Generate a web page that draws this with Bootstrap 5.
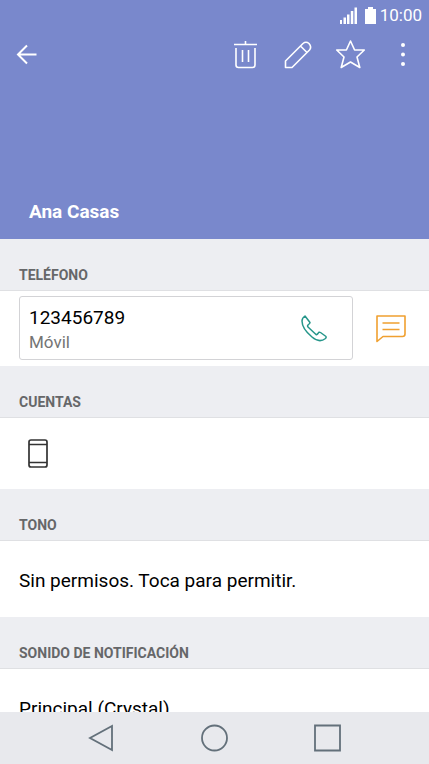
<!DOCTYPE html>
<html lang="es">
<head>
<meta charset="utf-8">
<meta name="viewport" content="width=device-width, initial-scale=1">
<title>Ana Casas</title>
<link rel="stylesheet" href="https://cdn.jsdelivr.net/npm/bootstrap@5.3.0/dist/css/bootstrap.min.css">
<style>
  body { font-family: Roboto, "Liberation Sans", sans-serif; color: #000; background: #fff; }
  svg { display: block; fill: none; stroke: currentColor; }
  .hero { background: #7988cc; min-height: 239px; }
  .status-bar { height: 30px; font-size: 17px; line-height: 30px; padding-right: 7px; }
  .icon-btn { width: 52px; height: 50px; border: 0; border-radius: 0; padding: 0; color: inherit; }
  .icon-btn:hover { color: inherit; }
  .tools { gap: 1px; }
  .contact-name { font-size: 19px; line-height: 24px; padding: 0 29px 15px; }
  .section-title { font-size: 14px; line-height: 20px; padding: 26px 19px 5px; color: #666769; background: #edeef2; border-bottom: 1px solid #dfe0e3; }
  .phone-row { padding: 5px 0 6px 19px; }
  .phone-card { border: 1px solid #d3d3d6; border-radius: 3px; height: 64px; padding-left: 9px; padding-right: 12px; }
  .entry { font-size: 19px; line-height: 24px; }
  .kind { font-size: 17px; line-height: 24px; color: #747474; }
  .icon-btn.call, .icon-btn.call:hover { color: #26968a; }
  .icon-btn.message, .icon-btn.message:hover { color: #f0a030; width: 76px; }
  .account-row { padding: 20px 27px; height: 71px; color: #333; }
  .entry-row { min-height: 76px; padding: 4px 19px 0; }
  .content { min-height: 0; }
  .system-nav { height: 52px; background: #e8e9ed; color: #63707a; padding: 0 44px; }
</style>
<script src="https://cdn.jsdelivr.net/npm/bootstrap@5.3.0/dist/js/bootstrap.bundle.min.js"></script>
</head>
<body class="d-flex flex-column vh-100 overflow-hidden">
<header class="hero d-flex flex-column flex-shrink-0 text-white">
  <div class="status-bar d-flex align-items-center justify-content-end gap-1">
    <svg class="me-1" width="17" height="17" viewBox="0 0 17 17" aria-hidden="true"><path fill="currentColor" stroke="none" d="M0 13h2v4H0zM3.500 10.500h2.500v6.500H3.500zM7 7.500h2.500v9.500H7zM10.800 4h2.500v13h-2.500zM14.500 0.500h2.500v16.500h-2.500z"/></svg>
    <svg width="11" height="17" viewBox="0 0 11 17" aria-hidden="true"><path fill="currentColor" stroke="none" d="M3 0h5v2h3v15H0V2h3z"/></svg>
    <span>10:00</span>
  </div>
  <div class="d-flex justify-content-between">
    <button class="btn icon-btn" aria-label="Volver"><svg width="52" height="50" viewBox="0 0 52 50" stroke-width="2"><path d="M36.500 24.500H18M27 15.500L18 24.500L27 33.500"/></svg></button>
    <div class="d-flex tools">
      <button class="btn icon-btn" aria-label="Eliminar"><svg width="52" height="50" viewBox="0 0 52 50" stroke-width="1.600"><path d="M16 14.500H39M27.500 11V14M18 18V35Q18 37.500 20.500 37.500H34.500Q37 37.500 37 35V18M24.500 20V32M30.500 20V32"/></svg></button>
      <button class="btn icon-btn" aria-label="Editar"><svg width="52" height="50" viewBox="0 0 52 50" stroke-width="1.600" stroke-linejoin="round"><path d="M14.500 37.500V31L32 13.500Q35 11 38 13.500Q41 17 38.500 20L21 37.500ZM29.500 16L36 22.500"/></svg></button>
      <button class="btn icon-btn" aria-label="Favorito"><svg width="52" height="50" viewBox="0 0 52 50" stroke-width="1.600" stroke-linejoin="round"><path d="M26.500 11L30.600 20H40.300L33 27L35.800 37.500L26.500 32L17.200 37.500L20 27L12.700 20H22.400Z"/></svg></button>
      <button class="btn icon-btn" aria-label="Más opciones"><svg width="52" height="50" viewBox="0 0 52 50"><g fill="currentColor" stroke="none"><circle cx="26" cy="15" r="2"/><circle cx="26" cy="24.500" r="2"/><circle cx="26" cy="34" r="2"/></g></svg></button>
    </div>
  </div>
  <h1 class="contact-name fw-bold mt-auto mb-0">Ana Casas</h1>
</header>
<main class="content flex-fill overflow-hidden">
  <section>
    <h2 class="section-title fw-bold mb-0">TELÉFONO</h2>
    <div class="phone-row d-flex align-items-center">
      <div class="phone-card flex-fill d-flex align-items-center justify-content-between">
        <div class="pt-1"><div class="entry">123456789</div><div class="kind">Móvil</div></div>
        <button class="btn icon-btn call" aria-label="Llamar"><svg width="52" height="50" viewBox="0 0 52 50" stroke-width="1.500" stroke-linejoin="round"><path d="M17 13L22 19.500Q22 20.500 20.500 21.500Q19 22.500 20 24L28 31.500Q29 32 30 30.500Q31 28.500 32.500 29.500L38 33.500Q38.500 34.500 37.500 35.500C33 39 28 37.500 24 34C18 29 14 23 14 18Q14 15 17 13Z"/></svg></button>
      </div>
      <button class="btn icon-btn message" aria-label="Enviar mensaje"><svg width="76" height="50" viewBox="0 0 76 50" stroke-width="1.600" stroke-linejoin="round"><path d="M24 13H52V31Q52 33.500 49.500 33.500H30L24 38.500ZM29.500 20H46.500M29.500 26.500H46.500"/></svg></button>
    </div>
  </section>
  <section>
    <h2 class="section-title fw-bold mb-0">CUENTAS</h2>
    <div class="account-row"><svg width="22" height="31" viewBox="0 0 22 31" stroke-width="1.700" role="img" aria-label="Teléfono"><rect x="2" y="2" width="18" height="27" rx="2"/><path d="M2 6.500H20M2 24.500H20"/></svg></div>
  </section>
  <section>
    <h2 class="section-title fw-bold mb-0">TONO</h2>
    <div class="entry-row entry d-flex align-items-center">Sin permisos. Toca para permitir.</div>
  </section>
  <section>
    <h2 class="section-title fw-bold mb-0">SONIDO DE NOTIFICACIÓN</h2>
    <div class="entry-row entry d-flex align-items-center">Principal (Crystal)</div>
  </section>
</main>
<nav class="system-nav d-flex flex-shrink-0" aria-label="Sistema">
  <button class="btn icon-btn flex-fill d-flex justify-content-center" aria-label="Atrás"><svg width="52" height="50" viewBox="0 0 52 50" stroke-width="1.800"><path d="M37 14V38L15 26Z"/></svg></button>
  <button class="btn icon-btn flex-fill d-flex justify-content-center" aria-label="Inicio"><svg width="52" height="50" viewBox="0 0 52 50" stroke-width="1.800"><circle cx="25.500" cy="26" r="12.500"/></svg></button>
  <button class="btn icon-btn flex-fill d-flex justify-content-center" aria-label="Recientes"><svg width="52" height="50" viewBox="0 0 52 50" stroke-width="1.800"><path d="M13 13.500H38V38.500H13Z"/></svg></button>
</nav>
</body>
</html>
